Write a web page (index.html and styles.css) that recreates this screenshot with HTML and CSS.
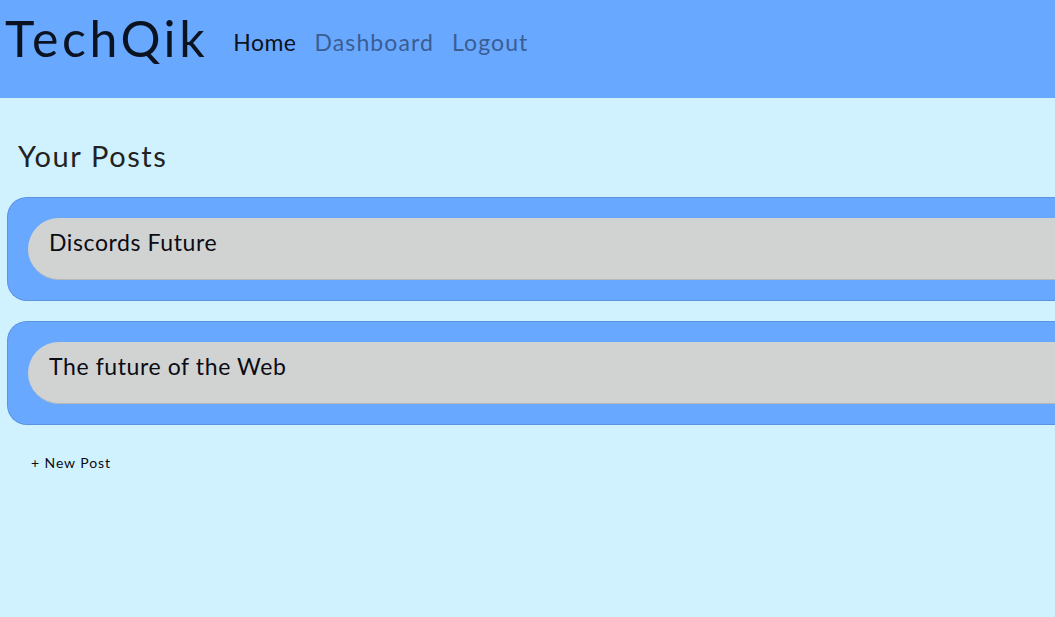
FILE: index.html
```html
<!DOCTYPE html>
<html lang="en">
<head>
<meta charset="utf-8">
<title>TechQik</title>
<link rel="stylesheet" href="styles.css">
</head>
<body>
<header class="site-header">
  <h1 class="brand">TechQik</h1>
  <nav class="nav">
    <a class="nav-link active" href="#">Home</a>
    <a class="nav-link" href="#">Dashboard</a>
    <a class="nav-link" href="#">Logout</a>
  </nav>
</header>
<main class="content">
  <h2 class="section-title">Your Posts</h2>
  <div class="post">
    <div class="post-title">Discords Future</div>
  </div>
  <div class="post">
    <div class="post-title">The future of the Web</div>
  </div>
  <a class="new-post" href="#">+ New Post</a>
</main>
</body>
</html>
```
FILE: styles.css
```css
html, body {
  margin: 0;
  padding: 0;
}
body {
  background: #d0f2ff;
  font-family: Lato, "Noto Sans", sans-serif;
  color: #111;
  overflow: hidden;
  height: 617px;
}
.site-header {
  background: #69a8ff;
  height: 98px;
  display: flex;
  align-items: flex-start;
  padding-left: 5px;
}
.brand {
  margin: 8px 0 0 0;
  font-size: 50px;
  font-weight: 400;
  color: #0b1320;
  letter-spacing: 3.6px;
}
.nav {
  display: flex;
  gap: 18px;
  margin: 28px 0 0 25px;
}
.nav-link {
  font-size: 23px;
  letter-spacing: 1.1px;
  text-decoration: none;
  color: #3a5d94;
}
.nav-link.active {
  color: #0b1320;
  letter-spacing: 0.5px;
}
.content {
  padding: 40px 0 0 7px;
}
.section-title {
  margin: 0 0 24px 11px;
  font-size: 29px;
  font-weight: 400;
  letter-spacing: 1.6px;
  color: #222;
}
.post {
  background: #69a8ff;
  border: 1px solid #5b94e2;
  border-right: none;
  border-radius: 20px 0 0 20px;
  padding: 20px 0 20px 20px;
  margin-bottom: 20px;
}
.post-title {
  background: #d1d2d2;
  border-bottom: 1px solid #b5b8bb;
  border-radius: 31px 0 0 31px;
  height: 62px;
  box-sizing: border-box;
  padding: 10px 21px 0;
  font-size: 23px;
  letter-spacing: 0.6px;
  color: #0b0b14;
}
.new-post {
  display: inline-block;
  margin: 9px 0 0 24px;
  font-size: 14px;
  letter-spacing: 0.9px;
  color: #0b0b14;
  text-decoration: none;
}
```
